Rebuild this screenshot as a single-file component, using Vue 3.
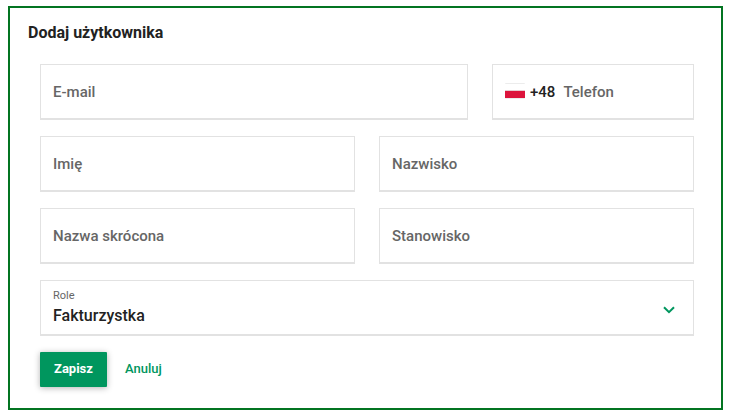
<template>
    <section class="panel">
        <h2 class="panel-title">Dodaj użytkownika</h2>

        <form class="user-form" @submit.prevent>
            <div class="field wide">
                <input id="email" v-model="user.email" type="email" placeholder=" " />
                <label for="email">E-mail</label>
            </div>

            <div class="phone">
                <svg class="flag" viewBox="0 0 20 17" aria-hidden="true">
                    <rect width="20" height="16" rx="1" fill="#ececec" />
                    <rect y="1" width="20" height="6" fill="#fff" />
                    <rect y="7" width="20" height="1" fill="#e5cdd0" />
                    <rect y="8" width="20" height="7" fill="#dc143c" />
                </svg>
                <span class="prefix">+48</span>
                <div class="field">
                    <input id="phone" v-model="user.phone" type="tel" placeholder=" " />
                    <label for="phone">Telefon</label>
                </div>
            </div>

            <div v-for="item in textFields" :key="item.id" class="field half">
                <input :id="item.id" v-model="user[item.id]" type="text" placeholder=" " />
                <label :for="item.id">{{ item.label }}</label>
            </div>

            <div class="field full">
                <select id="role" v-model="user.role">
                    <option>Fakturzystka</option>
                    <option>Administrator</option>
                </select>
                <label for="role" class="floated">Role</label>
                <svg class="chevron" viewBox="0 0 12 8" aria-hidden="true">
                    <path d="M1 1.2 6 6.2 11 1.2" />
                </svg>
            </div>

            <div class="actions">
                <button type="submit" class="save">Zapisz</button>
                <button type="button" class="cancel" @click="reset">Anuluj</button>
            </div>
        </form>
    </section>
</template>

<script setup>
import { reactive } from "vue";

const textFields = [
    { id: "firstName", label: "Imię" },
    { id: "lastName", label: "Nazwisko" },
    { id: "shortName", label: "Nazwa skrócona" },
    { id: "position", label: "Stanowisko" },
];

const emptyUser = {
    email: "",
    phone: "",
    firstName: "",
    lastName: "",
    shortName: "",
    position: "",
    role: "Fakturzystka",
};

const user = reactive({ ...emptyUser });

function reset() {
    Object.assign(user, emptyUser);
}
</script>

<style>
body {
    margin: 0;
    background: #fff;
}
</style>

<style scoped>
* {
    box-sizing: border-box;
}

.panel {
    margin: 6px 7px 8px 8px;
    padding: 16px 27px 21px 18px;
    border: 2px solid #037421;
    font-family: Roboto, "Noto Sans", sans-serif;
    font-size: 16px;
    color: #222;
}

.panel-title {
    margin: 0 0 22px;
    font-size: 16px;
    line-height: 18px;
    font-weight: 700;
}

.user-form {
    display: grid;
    grid-template-columns: repeat(6, 1fr);
    gap: 16px 24px;
    padding-left: 12px;
}

.field {
    position: relative;
}

.wide {
    grid-column: span 4;
}

.half {
    grid-column: span 3;
}

.full,
.actions {
    grid-column: 1 / -1;
}

input,
select {
    display: block;
    width: 100%;
    height: 56px;
    padding: 15px 12px 0;
    border: 1px solid #e2e2e2;
    border-bottom-width: 2px;
    border-radius: 0;
    outline: none;
    background: #fff;
    font: inherit;
    font-weight: 500;
    color: #222;
    appearance: none;
}

.field label {
    position: absolute;
    top: 18px;
    left: 13px;
    font-size: 15px;
    line-height: 20px;
    font-weight: 500;
    color: #666;
    pointer-events: none;
}

.field input:focus + label,
.field input:not(:placeholder-shown) + label,
.field label.floated {
    top: 6px;
    font-size: 11px;
    font-weight: 400;
}

input:focus,
select:focus {
    border-bottom-color: #00965e;
}

.phone {
    grid-column: span 2;
    display: flex;
    align-items: center;
    height: 56px;
    padding-left: 12px;
    border: 1px solid #e2e2e2;
    border-bottom-width: 2px;
}

.flag {
    width: 20px;
    height: 17px;
}

.prefix {
    margin: 0 8px 0 5px;
    font-size: 15px;
    line-height: 20px;
    font-weight: 500;
}

.phone .field {
    flex: 1;
    min-width: 0;
}

.phone input {
    height: 53px;
    padding-left: 0;
    border: 0;
}

.phone label {
    top: 17px;
    left: 0;
}

.chevron {
    position: absolute;
    top: 26px;
    right: 19px;
    width: 12px;
    height: 8px;
    fill: none;
    stroke: #00965e;
    stroke-width: 2;
    pointer-events: none;
}

.actions {
    display: flex;
    gap: 4px;
}

button {
    height: 35px;
    padding: 0 14px 2px;
    border: 0;
    border-radius: 1px;
    font: inherit;
    font-size: 13px;
    font-weight: 500;
    cursor: pointer;
}

.save {
    background: #00965e;
    box-shadow: 0 1px 6px rgba(0, 0, 0, 0.3);
    font-weight: 700;
    color: #fff;
}

.cancel {
    background: none;
    color: #00965e;
}
</style>
